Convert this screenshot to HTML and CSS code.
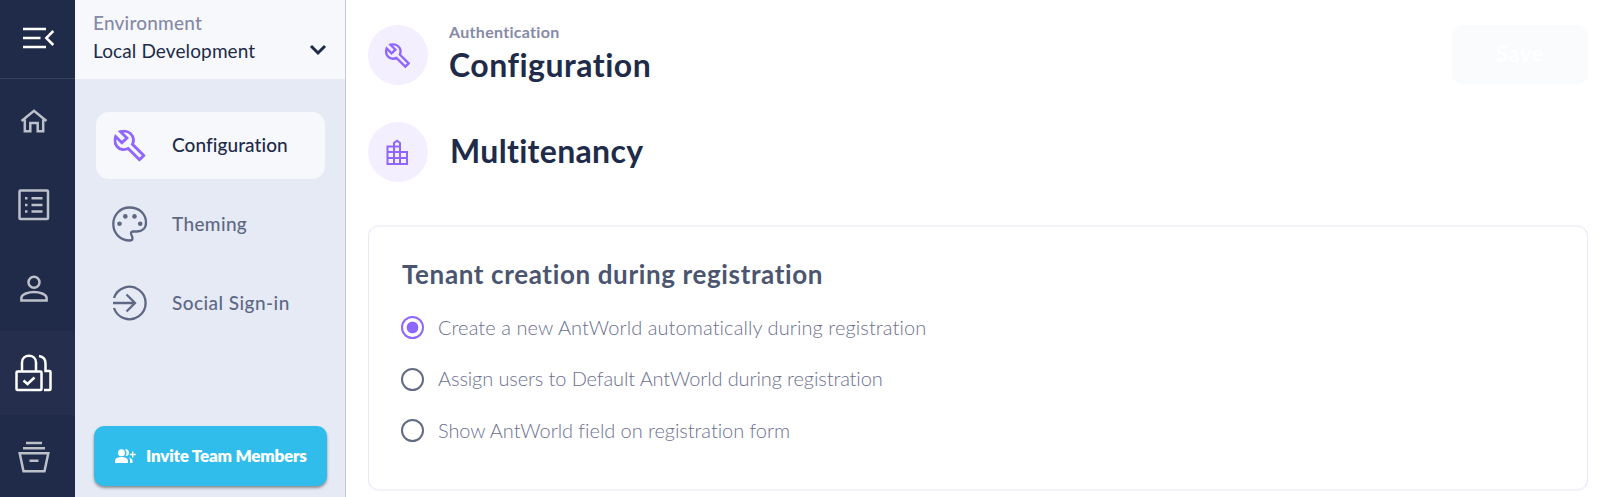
FILE: index.html
```html
<!DOCTYPE html>
<html lang="en">
<head>
<meta charset="utf-8">
<title>Authentication Configuration</title>
<link rel="stylesheet" href="styles.css">
</head>
<body>
<svg class="defs" width="0" height="0">
  <symbol id="wrench" viewBox="0 0 32 32"><path d="M7 2.200C11.500 .9 16.500 2.300 18.800 6.400C20.400 9.300 20.200 12 19 14.800L30.300 26L26 30.300L14.600 19C10.500 20.800 6 20 3.500 17C1.300 14.300 .9 10.500 2.200 7L8.400 13.200L13.400 8.500Z"/></symbol>
</svg>
<div class="app">
  <nav class="rail">
    <div class="rail-item rail-menu"><svg class="menu-icon" width="32" height="22" viewBox="0 0 32 22"><path d="M0 2H23M0 11H17.500M0 20H23M30.300 4L23.300 11L30.300 18"/></svg></div>
    <div class="rail-item rail-home"><svg width="28" height="24" viewBox="0 0 28 24"><path d="M4.800 10.500V22.300H10.300V14H17.700V22.300H23.200V10.500M1.500 12L14 1.800L26.500 12"/></svg></div>
    <div class="rail-item rail-list"><svg width="32" height="32" viewBox="0 0 32 32"><rect x="1.500" y="1.500" width="28.500" height="28.500" rx="1"/><path d="M7 9.200H9.500M7 15.900H9.500M7 22.600H9.500M13.500 9.200H24.500M13.500 15.900H24.500M13.500 22.600H24.500"/></svg></div>
    <div class="rail-item rail-user"><svg width="28" height="28" viewBox="0 0 28 28"><circle cx="14" cy="7.200" r="5.500"/><path d="M1.400 25.600V23C1.400 19 9 17 14 17S26.600 19 26.600 23V25.600Z"/></svg></div>
    <div class="rail-item active"><svg width="38" height="38" viewBox="0 0 38 38"><rect x="1.500" y="17.500" width="25" height="18.500" rx="1"/><path d="M7 17V8.500C7 -.5 21 -.5 21 8.500V17M24 2C28 2.500 30.500 5 30.500 9.500V17H34.500Q35.500 17 35.500 18V35Q35.500 36 34.500 36H29M8.500 26.500L12.500 30L19.500 23.500"/></svg></div>
    <div class="rail-item rail-box"><svg width="32" height="32" viewBox="0 0 32 32"><path d="M8 2H24M5 7.300H27M1.700 12.200H30.300L26.500 30.300H5.500ZM11.500 19.800H20.500"/></svg></div>
  </nav>
  <aside class="sidebar">
    <div class="environment">
      <div><div class="env-label">Environment</div><div class="env-name">Local Development</div></div>
      <svg class="chevron" width="18" height="12" viewBox="0 0 18 12"><path d="M2 2L9 9L16 2"/></svg>
    </div>
    <div class="nav-items">
      <a class="nav-item selected"><svg width="36" height="36" viewBox="0 0 36 36"><use href="#wrench" x="1.500" y="2.500" width="32" height="32"/></svg><span class="t-config">Configuration</span></a>
      <a class="nav-item"><svg width="36" height="36" viewBox="0 0 36 36"><path d="M17.500 1.500C27.500 1.500 34 8 34 16.500C34 22.500 30 25.500 25 25.500H21C19 25.500 18.500 27 19.500 29C21 31.800 21 34.500 18 34.500C8.500 34.500 1.300 27.500 1.300 18S8.500 1.500 17.500 1.500Z"/><g class="dots"><circle cx="7.500" cy="17.700" r="2.300"/><circle cx="13.300" cy="10.400" r="2.300"/><circle cx="22.500" cy="10.400" r="2.300"/><circle cx="28.200" cy="17.700" r="2.300"/></g></svg><span class="t-theming">Theming</span></a>
      <a class="nav-item"><svg width="36" height="36" viewBox="0 0 36 36"><path d="M2 13A16.200 16.200 0 1 1 2 23M1 18H22.500M14.500 9.500L23 18L14.500 26.500"/></svg><span class="t-social">Social Sign-in</span></a>
    </div>
    <button class="invite"><svg width="21" height="15" viewBox="0 0 21 15"><circle cx="6.500" cy="3.700" r="3.500"/><path d="M0 14V11.800C0 9 4 8 6.500 8S13 9 13 11.800V14ZM10 .4C15 -.6 15.500 7.500 10.500 7C12 5 12 2.500 10 .4ZM14 8.500C16 9 17.500 10 17.500 11.800V14H15V11.800C15 10.500 14.800 9.500 14 8.500ZM17 2.500H18.400V4.800H20.700V6.200H18.400V8.500H17V6.200H14.800V4.800H17Z"/></svg><span>Invite Team Members</span></button>
  </aside>
  <main class="content">
    <header class="section-head">
      <div class="badge"><svg width="25" height="25" viewBox="0 0 32 32"><use href="#wrench"/></svg></div>
      <div class="titles"><div class="crumb">Authentication</div><h1 class="t-title">Configuration</h1></div>
      <button class="save"><span>Save</span></button>
    </header>
    <section class="section-head second">
      <div class="badge"><svg class="city" width="23" height="26" viewBox="0 0 23 26"><path d="M1.500 7.500H8V25H1.500ZM8 25V4L11 1.800L14 4V25ZM14 13H21V25H14M1.500 13H14M1.500 19H21M8 7.500H14"/></svg></div>
      <h2 class="t-multi">Multitenancy</h2>
    </section>
    <section class="card">
      <h3><span>Tenant creation during registration</span></h3>
      <label class="option"><i class="radio checked"></i><span class="o-one">Create a new AntWorld automatically during registration</span></label>
      <label class="option"><i class="radio"></i><span class="o-two">Assign users to Default AntWorld during registration</span></label>
      <label class="option"><i class="radio"></i><span class="o-three">Show AntWorld field on registration form</span></label>
    </section>
  </main>
</div>
</body>
</html>
```
FILE: styles.css
```css
* { box-sizing: border-box; }
body { margin: 0; background: #fff; font-family: Lato, "Open Sans", sans-serif; font-variant-ligatures: none; overflow: hidden; }
h1, h2, h3 { margin: 0; }
button { border: 0; padding: 0; font-family: inherit; }
svg { fill: none; stroke: currentColor; stroke-width: 2; flex: none; display: block; }
.defs { position: absolute; }
.app { display: flex; height: 497px; }

.rail { width: 75px; flex: none; background: #202b49; color: #bcc0c9; overflow: hidden; }
.rail-item { height: 84px; display: flex; align-items: center; padding-left: 20px; }
.rail-item svg { stroke-width: 2.500; }
.rail-menu { height: 79px; padding: 0 0 3px 23px; border-bottom: 1px solid #38425e; color: #fff; }
.rail-home { padding-bottom: 1px; }
.rail-item.rail-list, .rail-item.rail-box { padding-left: 18px; }
.rail-item.active { padding-left: 15px; background: #252f4d; color: #fff; }

.sidebar { width: 271px; flex: none; background: #e6eaf5; border-right: 1px solid #c5c9d7; display: flex; flex-direction: column; }
.environment { height: 79px; padding: 9px 18px 0 18px; background: #f7f8fc; display: flex; justify-content: space-between; font-size: 19px; line-height: 28px; white-space: nowrap; }
.env-label { color: #868aa6; font-weight: 500; letter-spacing: .2px; }
.env-name { color: #202b49; letter-spacing: .12px; }
.chevron { color: #202b49; stroke-width: 3; margin-top: 35px; }
.nav-items { padding: 33px 20px 0 21px; display: grid; gap: 12px; }
.nav-item { height: 67px; padding-left: 16px; display: flex; align-items: center; gap: 24px; border-radius: 13px; color: #5e6884; font-size: 19px; line-height: 26px; font-weight: 500; white-space: nowrap; padding-bottom: 2px; }
.nav-item.selected { background: #f7f8fc; color: #202b49; padding-bottom: 1px; }
.nav-item svg { stroke-width: 2.300; }
.nav-item.selected svg { color: #8f66ff; stroke-width: 2.900; }
.t-config { letter-spacing: .08px; }
.t-theming { letter-spacing: .35px; }
.t-social { letter-spacing: .45px; }
.dots { fill: currentColor; stroke: none; }
.invite { margin: 89px 18px 0 19px; height: 60px; border-radius: 10px; background: #30bdeb; color: #fff; box-shadow: 0 2px 3px rgba(0,0,0,.4); display: flex; align-items: center; padding: 0 0 2px 21px; gap: 10px; font-size: 17px; font-weight: 800; letter-spacing: -.22px; white-space: nowrap; }
.invite svg { fill: currentColor; stroke: none; margin-top: 2px; }

.content { flex: 1; padding: 22px 23px 0 22px; }
.section-head { display: flex; height: 63px; color: #202b49; }
.badge { width: 60px; height: 60px; margin-top: 3px; border-radius: 50%; background: #f3efff; color: #8f66ff; display: flex; align-items: center; justify-content: center; flex: none; padding-right: 2px; }
.badge svg { stroke-width: 3; }
.badge .city { stroke-width: 2; }
.titles { margin-left: 21px; flex: 1; }
.crumb { font-size: 16px; line-height: 20px; color: #868aa6; font-weight: 700; letter-spacing: .3px; }
h1, h2 { font-size: 32px; line-height: 40px; font-weight: 700; white-space: nowrap; }
h1 { margin-top: 3px; letter-spacing: .5px; }
.save { width: 136px; height: 59px; margin-top: 3px; border-radius: 10px; background: #fafbfd; color: #fff; font-size: 22px; font-weight: 900; padding-bottom: 2px; letter-spacing: .5px; }
.second { margin-top: 34px; }
.second .badge { margin-top: 3px; }
.second h2 { margin: 12px 0 0 22px; letter-spacing: .33px; }
.card { margin-top: 43px; height: 266px; border: 1px solid #e9e9f6; border-top: 2px solid #f2f2fb; border-bottom: 2px solid #f2f2fb; border-radius: 11px; padding: 31px 32px 0; }
h3 { font-size: 26px; line-height: 32px; color: #4b5570; letter-spacing: .63px; white-space: nowrap; padding-left: 1px; }
.option { display: flex; align-items: center; height: 51.500px; gap: 14px; color: #6c7090; font-size: 20px; line-height: 24px; font-weight: 300; white-space: nowrap; }
h3 + .option { margin-top: 12px; }
.option span { padding-bottom: 2px; }
.o-one { letter-spacing: .09px; }
.o-two { letter-spacing: -.11px; }
.o-three { letter-spacing: -.06px; }
.radio { width: 23px; height: 23px; border: 2px solid #626b84; border-radius: 50%; flex: none; }
.checked { border-color: #8f66ff; background: radial-gradient(circle, #8f66ff 5.500px, transparent 6.200px); }
```
